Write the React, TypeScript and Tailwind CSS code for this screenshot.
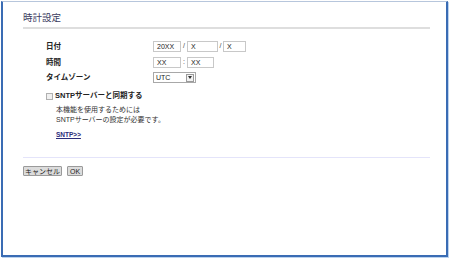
import React from "react";

const jp = { fontFamily: '"Liberation Sans", "Noto Sans CJK JP", sans-serif' };

function Box({ value, w }: { value: string; w: string }) {
  return (
    <div
      className={`${w} flex h-[11px] items-center border border-[#c8c8c8] bg-white pl-[3px] text-[7px] leading-none text-[#222]`}
    >
      {value}
    </div>
  );
}

function Label({ children }: { children: React.ReactNode }) {
  return (
    <div className="w-[107px] text-[7.5px] font-bold leading-none text-[#222]">
      {children}
    </div>
  );
}

export default function App() {
  return (
    <div className="h-[259px] w-[450px] bg-white" style={jp}>
      <div className="ml-[1px] mt-[1px] h-[256px] w-[447px] border-b-2 border-l-2 border-r-2 border-t border-[#3a6cb4] border-t-[#b7c6dc] bg-white pl-[20px] pr-[16px] pt-[10px] shadow-[1px_1px_0_#bcd3ef]">
        <h1 className="text-[9.5px] font-normal leading-[12px] text-[#3b3b5e]">
          時計設定
        </h1>
        <div className="mt-[3px] h-[2px] w-[407px] bg-[#dedede]" />

        <div className="mt-[12px] flex flex-col pl-[23px]">
          <div className="flex h-[11px] items-center">
            <Label>日付</Label>
            <Box value="20XX" w="w-[28px]" />
            <span className="w-[6px] text-center text-[7px] text-[#444]">/</span>
            <Box value="X" w="w-[31px]" />
            <span className="w-[5px] text-center text-[7px] text-[#444]">/</span>
            <Box value="X" w="w-[23px]" />
          </div>
          <div className="mt-[5px] flex h-[11px] items-center">
            <Label>時間</Label>
            <Box value="XX" w="w-[28px]" />
            <span className="w-[6px] text-center text-[7px] text-[#444]">:</span>
            <Box value="XX" w="w-[27px]" />
          </div>
          <div className="mt-[4px] flex h-[11px] items-center">
            <Label>タイムゾーン</Label>
            <div className="flex h-[11px] w-[43px] items-center justify-between border border-[#a8a8a8] bg-white pl-[2px] pr-[1px] text-[7px] leading-none text-[#222]">
              <span>UTC</span>
              <span className="flex h-[8px] w-[8px] items-center justify-center border border-[#9a9a9a] bg-[#f2f2f2]">
                <svg width="4" height="3" viewBox="0 0 4 3">
                  <path d="M0 0h4L2 3z" fill="#333" />
                </svg>
              </span>
            </div>
          </div>

          <div className="mt-[8px] flex h-[10px] items-center">
            <span className="h-[7px] w-[7px] border border-[#b0b0b0] bg-[#f0f0f0]" />
            <span className="ml-[2px] text-[7.5px] font-bold leading-none text-[#222]">
              SNTPサーバーと同期する
            </span>
          </div>

          <div className="mt-[4px] pl-[10px] text-[7px] leading-[10px] text-[#333]">
            <p>本機能を使用するためには</p>
            <p>SNTPサーバーの設定が必要です。</p>
          </div>
          <div className="mt-[6px] h-[7px] pl-[10px] text-[6.5px] leading-[7px]">
            <a className="font-bold text-[#2d2d7a] underline">SNTP&gt;&gt;</a>
          </div>
        </div>

        <div className="mt-[19px] h-[1px] w-[407px] bg-[#e4e4fa]" />

        <div className="mt-[8px] flex gap-[5px]">
          <button className="h-[10px] rounded-[1px] border border-[#9a9a9a] bg-[#dcdcdc] px-[1px] text-[7px] leading-none text-[#222]">
            キャンセル
          </button>
          <button className="h-[10px] rounded-[1px] border border-[#9a9a9a] bg-[#dcdcdc] px-[2px] text-[7px] leading-none text-[#222]">
            OK
          </button>
        </div>
      </div>
    </div>
  );
}
